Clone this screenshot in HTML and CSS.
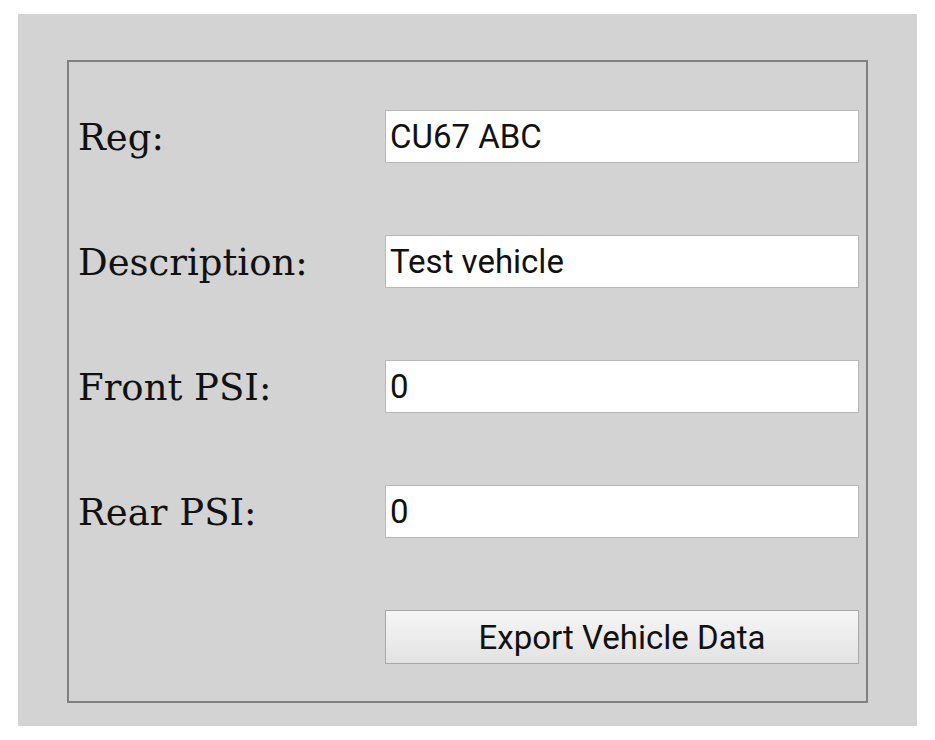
FILE: index.html
```html
<!DOCTYPE html>
<html>
<head>
<meta charset="utf-8">
<link rel="stylesheet" href="styles.css">
</head>
<body>
<div class="page">
  <div class="panel">
    <form class="form">
      <label class="label" for="reg">Reg:</label>
      <input class="field" id="reg" type="text" value="CU67 ABC">
      <label class="label" for="desc">Description:</label>
      <input class="field" id="desc" type="text" value="Test vehicle">
      <label class="label" for="front">Front PSI:</label>
      <input class="field" id="front" type="text" value="0">
      <label class="label" for="rear">Rear PSI:</label>
      <input class="field" id="rear" type="text" value="0">
      <span class="spacer"></span>
      <button class="button" type="button">Export Vehicle Data</button>
    </form>
  </div>
</div>
</body>
</html>
```
FILE: styles.css
```css
html, body {
  margin: 0;
  padding: 0;
  background: #ffffff;
}
body {
  padding: 14px 18px;
}
.page {
  background: #d3d3d3;
  height: 712px;
  box-sizing: border-box;
  padding: 46px 49px 0 49px;
}
.panel {
  border: 2px solid #808080;
  height: 643px;
  box-sizing: border-box;
  padding: 48px 7px 0 9px;
}
.form {
  display: grid;
  grid-template-columns: 1fr 474px;
  row-gap: 72px;
  align-items: center;
  margin: 0;
}
.label {
  font-family: "DejaVu Serif", "Liberation Serif", serif;
  font-size: 37px;
  color: #111;
  line-height: 44px;
  padding-top: 3px;
}
.field {
  height: 53px;
  box-sizing: border-box;
  border: 1px solid #b8b8b8;
  background: #ffffff;
  font-family: Roboto, "Liberation Sans", sans-serif;
  font-size: 33px;
  color: #111;
  padding: 0 4px;
  margin: 0;
  outline: none;
}
.button {
  height: 54px;
  box-sizing: border-box;
  border: 1px solid #a8a8a8;
  background: linear-gradient(#f6f6f6, #e2e2e2);
  font-family: Roboto, "Liberation Sans", sans-serif;
  font-size: 33px;
  color: #111;
  margin: 0;
  padding: 0;
  border-radius: 0;
}
```
